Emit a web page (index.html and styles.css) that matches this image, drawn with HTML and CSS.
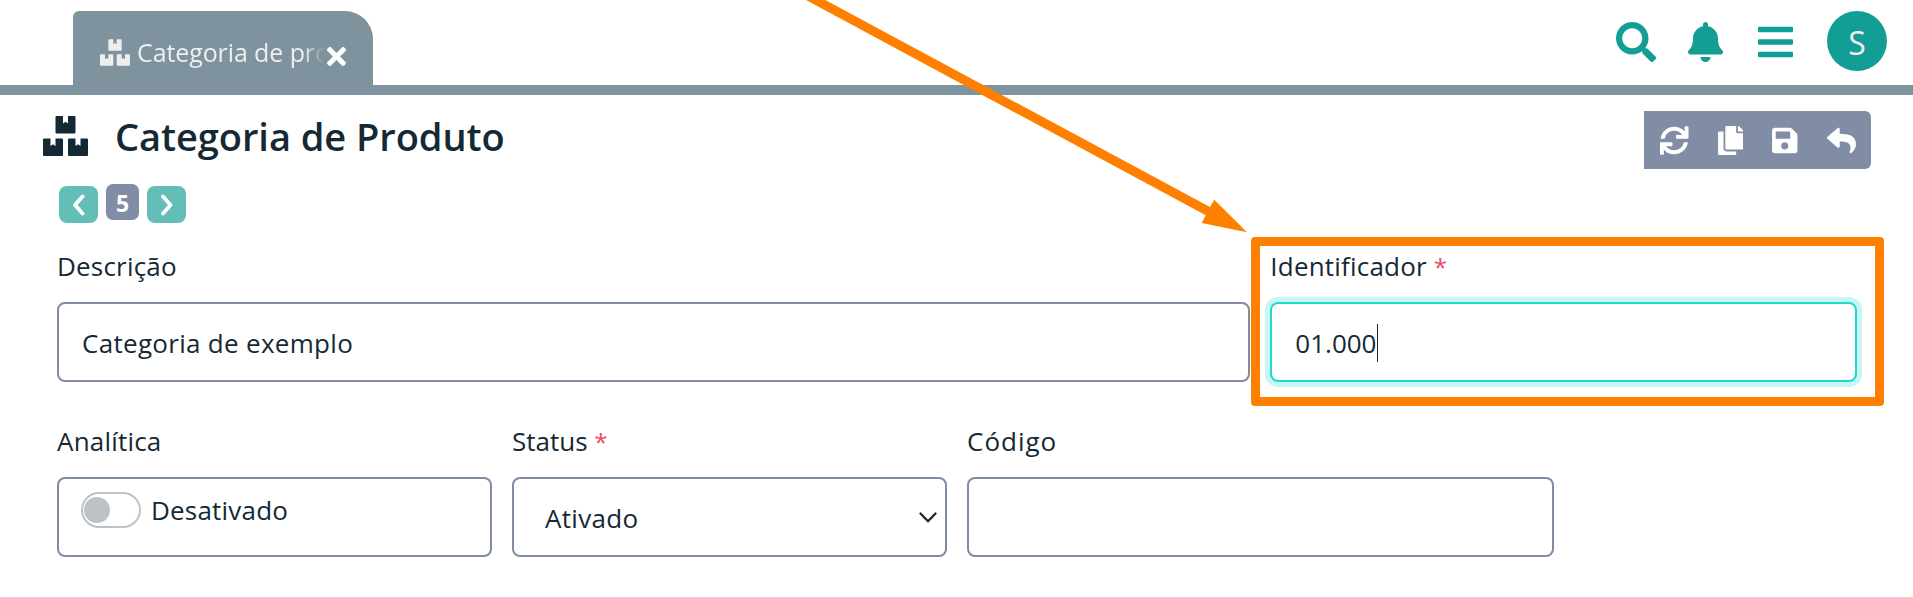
FILE: index.html
```html
<!DOCTYPE html>
<html lang="pt-BR">
<head>
<meta charset="utf-8">
<title>Categoria de Produto</title>
<link rel="stylesheet" href="styles.css">
</head>
<body>
<svg width="0" height="0" class="sprite" aria-hidden="true">
  <symbol id="boxes" viewBox="0 0 576 512"><path d="M560 288h-80v96l-32-21.3-32 21.3v-96h-80c-8.8 0-16 7.2-16 16v192c0 8.8 7.2 16 16 16h224c8.8 0 16-7.2 16-16V304c0-8.8-7.2-16-16-16zm-384-64h224c8.8 0 16-7.2 16-16V16c0-8.8-7.2-16-16-16h-80v96l-32-21.3L256 96V0h-80c-8.8 0-16 7.2-16 16v192c0 8.8 7.2 16 16 16zm64 64h-80v96l-32-21.3L96 384v-96H16c-8.8 0-16 7.2-16 16v192c0 8.8 7.2 16 16 16h224c8.8 0 16-7.2 16-16V304c0-8.8-7.2-16-16-16z"/></symbol>
</svg>
<header class="topbar">
  <div class="tab">
    <svg class="tab-icon"><use href="#boxes"/></svg>
    <span class="tab-label">Categoria de pro</span>
    <svg class="tab-close" viewBox="0 80 352 352"><path d="M242.72 256l100.07-100.07c12.28-12.28 12.28-32.19 0-44.48l-22.24-22.24c-12.28-12.28-32.19-12.28-44.48 0L176 189.28 75.93 89.21c-12.28-12.28-32.19-12.28-44.48 0L9.21 111.45c-12.28 12.28-12.28 32.19 0 44.48L109.28 256 9.21 356.07c-12.28 12.28-12.28 32.19 0 44.48l22.24 22.24c12.28 12.28 32.2 12.28 44.48 0L176 322.72l100.07 100.07c12.28 12.28 32.2 12.28 44.48 0l22.24-22.24c12.28-12.28 12.28-32.19 0-44.48L242.72 256z"/></svg>
  </div>
  <nav class="actions">
    <svg class="i-search" viewBox="0 0 512 512"><path d="M505 442.7L405.3 343c-4.5-4.5-10.6-7-17-7H372c27.6-35.3 44-79.7 44-128C416 93.1 322.9 0 208 0S0 93.1 0 208s93.1 208 208 208c48.3 0 92.7-16.4 128-44v16.3c0 6.4 2.5 12.5 7 17l99.7 99.7c9.4 9.4 24.6 9.4 33.9 0l28.3-28.3c9.4-9.4 9.4-24.6.1-34zM208 336c-70.7 0-128-57.2-128-128 0-70.7 57.2-128 128-128 70.7 0 128 57.2 128 128 0 70.7-57.2 128-128 128z"/></svg>
    <svg class="i-bell" viewBox="0 0 448 512"><path d="M224 512c35.32 0 63.97-28.65 63.97-64H160.03c0 35.35 28.65 64 63.97 64zm215.39-149.71c-19.32-20.76-55.47-51.99-55.47-154.29 0-77.7-54.48-139.9-127.94-155.16V32c0-17.67-14.32-32-31.98-32s-31.98 14.33-31.98 32v20.84C118.56 68.1 64.08 130.3 64.08 208c0 102.3-36.15 133.53-55.47 154.29-6 6.45-8.66 14.16-8.61 21.71.11 16.4 12.98 32 32.1 32h383.8c19.12 0 32-15.6 32.1-32 .05-7.55-2.61-15.27-8.61-21.71z"/></svg>
    <svg class="i-bars" viewBox="0 0 448 512"><path d="M16 132h416c8.837 0 16-7.163 16-16V76c0-8.837-7.163-16-16-16H16C7.163 60 0 67.163 0 76v40c0 8.837 7.163 16 16 16zm0 160h416c8.837 0 16-7.163 16-16v-40c0-8.837-7.163-16-16-16H16c-8.837 0-16 7.163-16 16v40c0 8.837 7.163 16 16 16zm0 160h416c8.837 0 16-7.163 16-16v-40c0-8.837-7.163-16-16-16H16c-8.837 0-16 7.163-16 16v40c0 8.837 7.163 16 16 16z"/></svg>
    <div class="avatar">S</div>
  </nav>
</header>
<main class="page">
  <div class="title-row">
    <svg class="title-icon"><use href="#boxes"/></svg>
    <h1 class="title">Categoria de Produto</h1>
    <div class="toolbar">
      <svg class="t-sync" viewBox="0 0 512 512"><path d="M440.65 12.57l4 82.77A247.16 247.16 0 0 0 255.83 8C134.73 8 33.91 94.92 12.29 209.82A12 12 0 0 0 24.09 224h49.05a12 12 0 0 0 11.67-9.26 175.91 175.91 0 0 1 317-56.94l-101.46-4.86a12 12 0 0 0-12.57 12v47.41a12 12 0 0 0 12 12H500a12 12 0 0 0 12-12V12a12 12 0 0 0-12-12h-47.37a12 12 0 0 0-11.98 12.57zM255.83 432a175.61 175.61 0 0 1-146-77.8l101.8 4.87a12 12 0 0 0 12.57-12v-47.4a12 12 0 0 0-12-12H12a12 12 0 0 0-12 12V500a12 12 0 0 0 12 12h47.35a12 12 0 0 0 12-12.6l-4.15-82.57A247.17 247.17 0 0 0 255.83 504c121.11 0 221.93-86.92 243.55-201.82a12 12 0 0 0-11.8-14.18h-49.05a12 12 0 0 0-11.67 9.26A175.86 175.86 0 0 1 255.83 432z"/></svg>
      <svg class="t-copy" viewBox="0 0 448 512"><path d="M320 448v40c0 13.255-10.745 24-24 24H24c-13.255 0-24-10.745-24-24V120c0-13.255 10.745-24 24-24h72v296c0 30.879 25.121 56 56 56h168zm0-344V0H152c-13.255 0-24 10.745-24 24v368c0 13.255 10.745 24 24 24h272c13.255 0 24-10.745 24-24V128H344c-13.2 0-24-10.8-24-24zm120.971-31.029L375.029 7.029A24 24 0 0 0 358.059 0H352v96h96v-6.059a24 24 0 0 0-7.029-16.97z"/></svg>
      <svg class="t-save" viewBox="0 0 448 512"><path d="M433.941 129.941l-83.882-83.882A48 48 0 0 0 316.118 32H48C21.49 32 0 53.49 0 80v352c0 26.51 21.49 48 48 48h352c26.51 0 48-21.49 48-48V163.882a48 48 0 0 0-14.059-33.941zM224 416c-35.346 0-64-28.654-64-64 0-35.346 28.654-64 64-64s64 28.654 64 64c0 35.346-28.654 64-64 64zm96-304.52V212c0 6.627-5.373 12-12 12H76c-6.627 0-12-5.373-12-12V108c0-6.627 5.373-12 12-12h228.52c3.183 0 6.235 1.264 8.485 3.515l3.48 3.48A11.996 11.996 0 0 1 320 111.48z"/></svg>
      <svg class="t-reply" viewBox="0 0 512 512"><path d="M8.309 189.836L184.313 37.851C199.719 24.546 224 35.347 224 56.015v80.053c160.629 1.839 288 34.032 288 186.258 0 61.441-39.581 122.309-83.333 154.132-13.653 9.931-33.111-2.533-28.077-18.631 45.344-145.012-21.507-183.51-176.59-185.742V360c0 20.7-24.3 31.453-39.687 18.164l-176.004-152c-11.071-9.562-11.086-26.753 0-36.328z"/></svg>
    </div>
  </div>
  <div class="pager">
    <button class="step"><svg class="chev" viewBox="0 0 14 22"><path d="M10.500 2.500L3 11l7.500 8.500"/></svg></button>
    <span class="count">5</span>
    <button class="step"><svg class="chev" viewBox="0 0 14 22"><path d="M3 2.500L10.500 11L3 19.500"/></svg></button>
  </div>
  <form class="form">
    <div class="field w8"><label class="label">Descrição</label><div class="box"><span class="spaced">Categoria de exemplo</span></div></div>
    <div class="field w4"><label class="label">Identificador <i class="req">*</i></label><div class="box focus"><span>01.000</span><i class="caret"></i></div></div>
    <div class="field w3"><label class="label">Analítica</label><div class="box switch"><i class="toggle"></i><span>Desativado</span></div></div>
    <div class="field w3"><label class="label tight">Status <i class="req">*</i></label><div class="box select"><span class="spaced">Ativado</span><svg class="arrow" viewBox="0 0 18 12"><path d="M1.500 1.500L9 9.300l7.500-7.800"/></svg></div></div>
    <div class="field w4"><label class="label wide">Código</label><div class="box"></div></div>
  </form>
</main>
<div class="highlight"></div>
<svg class="pointer" viewBox="0 0 1913 597"><path d="M806 0H825.300L1210 207L1214.300 199.700L1247 232.300L1201.700 223L1205.700 215.300Z"/></svg>
</body>
</html>
```
FILE: styles.css
```css
* { box-sizing: border-box; }
body { margin: 0; height: 597px; position: relative; overflow: hidden; background: #fff; color: #152935; font-family: "Open Sans", "Noto Sans", sans-serif; font-size: 26px; }
svg { display: block; fill: currentColor; }
i { font-style: normal; }
.sprite { position: absolute; }

.topbar { height: 95px; padding: 11px 26px 0 73px; border-bottom: 10px solid #7e939d; display: flex; justify-content: space-between; }
.tab { width: 300px; height: 74px; padding: 0 27px; display: flex; align-items: center; background: #7e939d; color: #eee; border-radius: 6px 28px 0 0; font-size: 25px; }
.tab-icon { width: 30px; height: 27px; flex: none; margin: 9px 7px 0 0; }
.tab-label { width: 190px; flex: none; white-space: nowrap; margin-top: 8px; line-height: 40px; letter-spacing: -0.1px; -webkit-mask-image: linear-gradient(to right, #000 166px, transparent 188px); mask-image: linear-gradient(to right, #000 166px, transparent 188px); }
.tab-close { width: 19px; height: 19px; color: #fff; margin-top: 17px; flex: none; }

.actions { display: flex; color: #129e94; }
.i-search { width: 40px; height: 40px; margin: 11px 32px 0 0; }
.i-bell { width: 35px; height: 40px; margin: 11px 35px 0 0; }
.i-bars { width: 35px; height: 40px; margin: 11px 34px 0 0; }
.avatar { width: 60px; height: 60px; border-radius: 50%; background: #129e94; color: #eee; text-align: center; font-size: 32px; line-height: 63px; }

.page { padding: 16px 56px 0 57px; }
.title-row { display: flex; height: 58px; margin: 0 -14px; }
.title-icon { width: 45px; height: 40px; margin: 5px 27px 0 0; }
.title { margin: 0; font-size: 38px; font-weight: 600; line-height: 50px; letter-spacing: -0.05px; flex: 1; white-space: nowrap; }
.toolbar { width: 227px; height: 58px; background: #818da4; color: #fff; border-radius: 0 6px 6px 0; display: flex; align-items: center; padding-left: 16px; }
.t-sync { width: 28.5px; height: 29px; margin-right: 29px; }
.t-copy { width: 25.5px; height: 29px; margin-right: 29px; }
.t-save { width: 25.5px; height: 29px; margin-right: 29px; }
.t-reply { width: 29px; height: 29px; }

.pager { display: flex; align-items: center; gap: 8px; margin: 15px 0 0 2px; height: 39px; }
.step { width: 39px; height: 37px; padding: 0; border: 0; border-radius: 8px; background: #64beb8; color: #fff; display: flex; align-items: center; justify-content: center; margin-top: 2px; }
.chev { width: 14px; height: 22px; fill: none; stroke: #fff; stroke-width: 3.8; stroke-linecap: round; stroke-linejoin: round; }
.count { width: 33px; height: 36px; border-radius: 7px; background: #818da4; color: #fff; font-weight: 700; font-size: 23px; line-height: 39px; text-align: center; margin-top: -3px; }

.form { display: grid; grid-template-columns: repeat(12, 1fr); column-gap: 20px; row-gap: 40px; margin-top: 24px; }
.w3 { grid-column: span 3; }
.w4 { grid-column: span 4; }
.w8 { grid-column: span 8; }
.label { display: block; height: 55px; line-height: 38px; white-space: nowrap; letter-spacing: 0.2px; }
.wide { letter-spacing: 1px; }
.tight { letter-spacing: 0; }
.spaced { letter-spacing: 0.3px; }
.req { color: #e8485f; font-size: 24px; }
.box { height: 80px; border: 2px solid #7f8ca4; border-radius: 8px; padding: 2px 0 0 23px; display: flex; align-items: center; white-space: nowrap; background: #fff; }
.focus { border-color: #20d9ce; box-shadow: 0 0 0 5px #c8f6f3; }
.caret { width: 1px; height: 38px; margin-top: -1px; background: #152935; }
.toggle { width: 60px; height: 36px; border: 2px solid #bdc2c7; border-radius: 18px; padding: 3px 0 0 1px; margin-right: 10px; flex: none; }
.toggle::before { content: ""; display: block; width: 26px; height: 26px; border-radius: 50%; background: #bdc2c7; }
.switch { padding: 0 0 14px 22px; letter-spacing: 0.2px; }
.select { padding-left: 31px; justify-content: space-between; padding-right: 8px; }
.arrow { width: 18px; height: 12px; margin-top: 0; fill: none; stroke: #152935; stroke-width: 2.3; stroke-linecap: round; stroke-linejoin: round; }

.highlight { position: absolute; left: 1251px; top: 237px; width: 633px; height: 169px; border: 9px solid #ff8000; border-radius: 4px; }
.pointer { position: absolute; left: 0; top: 0; width: 1913px; height: 597px; fill: #ff8000; pointer-events: none; }
```
